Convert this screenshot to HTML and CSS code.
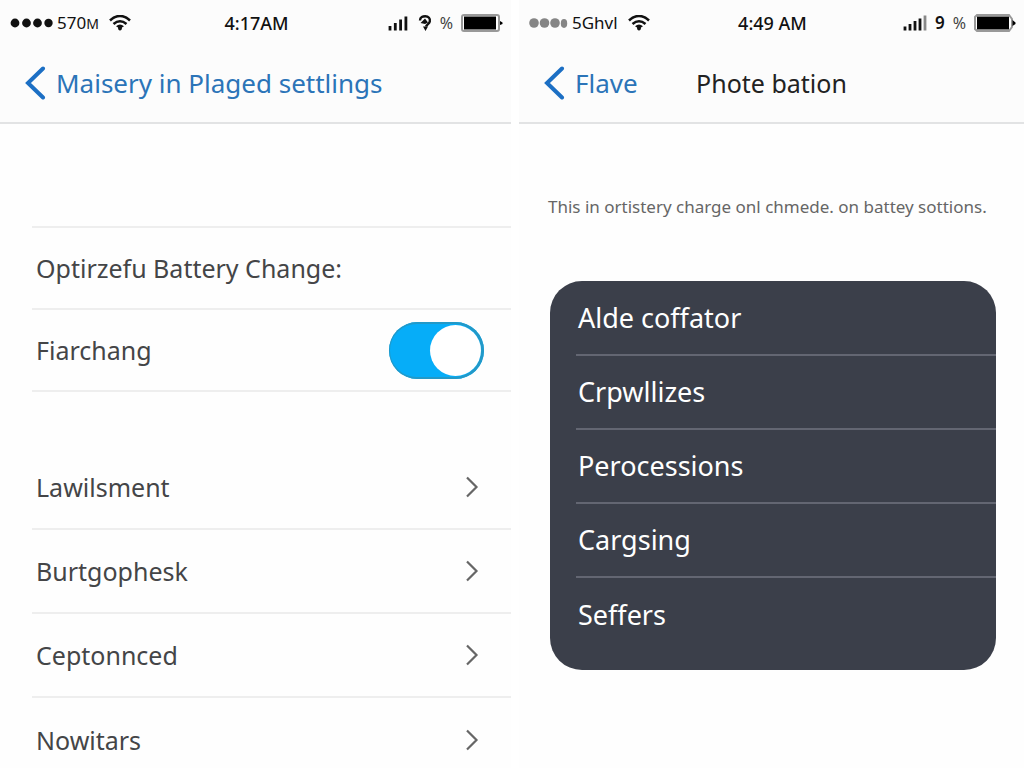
FILE: index.html
```html
<!DOCTYPE html>
<html lang="en">
<head>
<meta charset="utf-8">
<title>Battery settings</title>
<link rel="stylesheet" href="styles.css">
</head>
<body>
<main class="screens">
  <section class="screen">
    <header class="top">
      <div class="status">
        <div class="status-left">
          <svg class="dots" width="43" height="12" viewBox="0 0 43 12" aria-hidden="true"><circle cx="5" cy="6" r="4.4"/><circle cx="16.500" cy="6" r="4.400"/><circle cx="27.500" cy="6" r="4.400"/><circle cx="38.500" cy="6" r="4.200"/></svg>
          <span class="carrier">570<small>M</small></span>
          <svg class="wifi" width="22" height="16" viewBox="0 0 22 16" aria-hidden="true"><path d="M1 5.500Q11-3.500 21 5.500M4.500 9Q11 3.500 17.500 9"/><path class="solid" d="M7 11.200Q11 8 15 11.200L13 12.500Q13 15.500 11 15.500T9 12.500Z"/></svg>
        </div>
        <span class="time">4:17AM</span>
        <div class="status-right">
          <svg class="signal" width="22" height="16" viewBox="0 0 22 16" aria-hidden="true"><path d="M2 15.500V11M7.300 15.500V8M12.600 15.500V4.500M17.900 15.500V1.500"/></svg>
          <svg class="mark" width="14" height="16" viewBox="0 0 14 16" aria-hidden="true"><path d="M2 5.500C2 2 5 1.300 7.200 1.300C10.500 1.300 12.500 3.500 11.800 6.500C11.300 9 8.500 9.500 8 11.500"/><path class="solid" d="M2.500 8L7 3.500L10 7.500L7 9ZM5 11.500H10L7.500 16Z"/></svg>
          <span class="percent">%</span>
          <svg class="battery" width="42" height="18" viewBox="0 0 42 18" aria-hidden="true"><rect class="case" x="1" y="1" width="37" height="16" rx="2"/><rect x="3" y="2.500" width="32" height="13"/><path d="M39 7L41.500 8.500V10L39 11Z"/></svg>
        </div>
      </div>
      <nav class="nav">
        <a class="back" href="#"><svg width="21" height="34" viewBox="0 0 21 34" aria-hidden="true"><path d="M18 2.500L3 17L18 31.500"/></svg>Maisery in Plaged settlings</a>
      </nav>
    </header>
    <div class="options">
      <div class="row">Optirzefu Battery Change:</div>
      <label class="row" for="charge">Fiarchang<input id="charge" class="switch" type="checkbox" role="switch" checked></label>
    </div>
    <div class="links">
      <a class="row" href="#">Lawilsment<svg class="chevron" width="14" height="22" viewBox="0 0 14 22" aria-hidden="true"><path d="M2 1.500L11.500 11L2 20.500"/></svg></a>
      <a class="row" href="#">Burtgophesk<svg class="chevron" width="14" height="22" viewBox="0 0 14 22" aria-hidden="true"><path d="M2 1.500L11.500 11L2 20.500"/></svg></a>
      <a class="row" href="#">Ceptonnced<svg class="chevron" width="14" height="22" viewBox="0 0 14 22" aria-hidden="true"><path d="M2 1.500L11.500 11L2 20.500"/></svg></a>
      <a class="row" href="#">Nowitars<svg class="chevron" width="14" height="22" viewBox="0 0 14 22" aria-hidden="true"><path d="M2 1.500L11.500 11L2 20.500"/></svg></a>
    </div>
  </section>
  <section class="screen">
    <header class="top">
      <div class="status">
        <div class="status-left">
          <svg class="dots muted" width="39" height="12" viewBox="0 0 39 12" aria-hidden="true"><circle cx="5" cy="6" r="4.800"/><circle cx="15.500" cy="6" r="4.800"/><circle cx="26" cy="6" r="4.800"/><ellipse cx="35" cy="6.500" rx="3.200" ry="4.400"/></svg>
          <span class="carrier">5Ghvl</span>
          <svg class="wifi" width="22" height="16" viewBox="0 0 22 16" aria-hidden="true"><path d="M1 5.500Q11-3.500 21 5.500M4.500 9Q11 3.500 17.500 9"/><path class="solid" d="M7 11.200Q11 8 15 11.200L13 12.500Q13 15.500 11 15.500T9 12.500Z"/></svg>
        </div>
        <span class="time">4:49 AM</span>
        <div class="status-right">
          <svg class="signal" width="24" height="16" viewBox="0 0 24 16" aria-hidden="true"><path d="M2 15.500V11.500M7 15.500V9M12 15.500V6M17 15.500V3.500"/><path class="faint" d="M22 15.500V.5"/></svg>
          <span class="nine">9</span>
          <span class="percent">%</span>
          <svg class="battery" width="42" height="18" viewBox="0 0 42 18" aria-hidden="true"><path class="case" d="M3 1H35L38 5V13L35 17H3L1 15V3Z"/><rect x="3" y="2.500" width="32" height="13"/><path d="M38.500 6L41.500 8.500V10L38.500 12Z"/></svg>
        </div>
      </div>
      <nav class="nav">
        <a class="back" href="#"><svg width="21" height="34" viewBox="0 0 21 34" aria-hidden="true"><path d="M18 2.500L3 17L18 31.500"/></svg>Flave</a>
        <h1 class="title">Phote bation</h1>
      </nav>
    </header>
    <p class="note">This in ortistery charge onl chmede. on battey sottions.</p>
    <div class="card">
      <button class="item" type="button">Alde coffator</button>
      <button class="item" type="button">Crpwllizes</button>
      <button class="item" type="button">Perocessions</button>
      <button class="item" type="button">Cargsing</button>
      <button class="item" type="button">Seffers</button>
    </div>
  </section>
</main>
</body>
</html>
```
FILE: styles.css
```css
* { box-sizing: border-box; }
body {
  margin: 0;
  background: #fff;
  color: #444547;
  font: 25px/32px "Noto Sans", "Open Sans", sans-serif;
}
a { color: inherit; text-decoration: none; }
svg { flex: none; fill: none; }
.screens {
  display: grid;
  grid-template-columns: 511fr 505fr;
  gap: 8px;
  height: 100vh;
}
.screen {
  min-width: 0;
  overflow: hidden auto;
  scrollbar-width: none;
  background: #fefefe;
}
.top {
  background: #fcfcfc;
  border-bottom: 2px solid #e2e3e4;
}
.status {
  display: grid;
  grid-template-columns: 1fr auto 1fr;
  align-items: center;
  height: 44px;
  padding: 2px 8px 0 10px;
  color: #111;
  font-size: 17px;
  line-height: 24px;
}
.status-left, .status-right { display: flex; align-items: center; }
.status-left { gap: 4px; }
.status-right { justify-content: flex-end; gap: 8px; }
.dots { fill: #111; }
.dots.muted { fill: #858585; }
.carrier small { font-size: 14px; }
.wifi { margin-left: 6px; stroke: #111; stroke-width: 2.6; }
.solid { fill: #111; stroke: none; }
.time { font-weight: 500; font-size: 18px; }
.signal { stroke: #111; stroke-width: 2.8; }
.faint { stroke: #888; }
.mark { stroke: #111; stroke-width: 2.4; }
.nine { font-weight: 600; }
.percent { font-size: 16px; color: #444; }
.battery { fill: #000; }
.case { fill: #fff; stroke: #999; stroke-width: 2; }
.nav {
  display: grid;
  grid-template-columns: 1fr auto 1fr;
  align-items: center;
  height: 78px;
  padding: 0 25px;
}
.back {
  display: flex;
  align-items: center;
  gap: 10px;
  color: #2b74b8;
  font-size: 26px;
  white-space: nowrap;
}
.back svg { stroke: #1c6fc4; stroke-width: 4; stroke-linecap: round; }
.title { margin: 0; color: #222; font-size: 25px; font-weight: 400; }
.options { margin: 102px 0 0 32px; border-top: 2px solid #eee; }
.links { margin: 54px 0 0 32px; }
.row {
  display: flex;
  align-items: center;
  justify-content: space-between;
  min-height: 84px;
  padding: 0 32px 0 4px;
  border-bottom: 2px solid #eee;
}
.options .row { min-height: 82px; padding-right: 27px; }
.links .row:last-child { border-bottom: 0; }
.switch {
  appearance: none;
  display: flex;
  width: 95px;
  height: 57px;
  margin: 0;
  padding: 3px;
  border-radius: 29px;
  background: #06adf8;
  box-shadow: inset -1px 0 0 2px #2299c8;
}
.switch::before {
  content: "";
  width: 51px;
  height: 51px;
  border-radius: 50%;
  background: #fff;
}
.switch:checked { justify-content: flex-end; }
.chevron { stroke: #666; stroke-width: 2.2; }
.note {
  margin: 71px 24px 0 29px;
  color: #666;
  font-size: 17px;
  line-height: 24px;
}
.card {
  margin: 62px 28px 0 31px;
  padding: 1px 0 18px 26px;
  border-radius: 32px;
  background: #3b3f4a;
}
.item {
  display: block;
  width: 100%;
  height: 74px;
  padding: 0 2px;
  border: 0;
  border-bottom: 2px solid #636672;
  background: none;
  color: #fff;
  font: inherit;
  font-size: 27px;
  text-align: left;
}
.item:last-child { border-bottom: 0; }
```
